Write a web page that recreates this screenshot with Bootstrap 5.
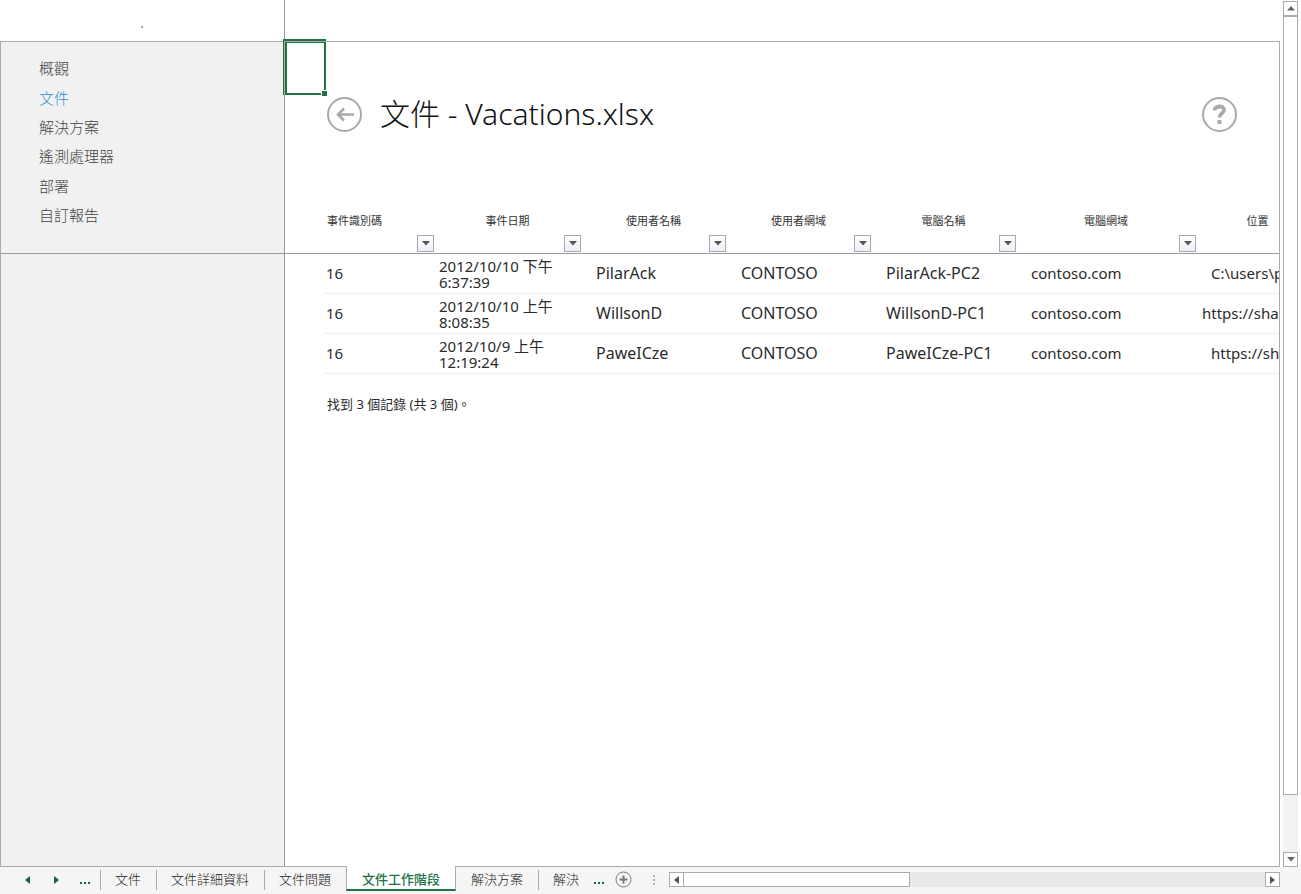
<!DOCTYPE html>
<html lang="zh-Hant">
<head>
<meta charset="utf-8">
<meta name="viewport" content="width=device-width, initial-scale=1">
<title>文件 - Vacations.xlsx</title>
<link href="https://cdn.jsdelivr.net/npm/bootstrap@5.3.0/dist/css/bootstrap.min.css" rel="stylesheet">
<script src="https://cdn.jsdelivr.net/npm/bootstrap@5.3.0/dist/js/bootstrap.bundle.min.js" defer></script>
<style>
:root { --line: #ababab; --rule: #9a9a9a; --green: #217346; --ink: #2b2b2b; }
body { font-family: "Noto Sans", "Noto Sans CJK TC", sans-serif; font-size: 15px; color: var(--ink); background: #fff; }
button { padding: 0; background: #fff; }
svg { display: block; }

/* Frozen panes */
.panes { display: grid; grid-template-columns: 285px minmax(0, 1fr); grid-template-rows: 41px 213px minmax(0, 1fr); border-bottom: 1px solid var(--line); }
.corner { border-right: 1px solid var(--rule); color: #888; line-height: 44px; }
.side-nav, .side-fill { background: #f1f1f1; border-left: 1px solid var(--line); border-right: 1px solid var(--rule); }
.side-nav { border-top: 1px solid var(--line); border-bottom: 1px solid var(--rule); padding: 12px 0 0 38px; }
.side-nav ul { display: grid; grid-auto-rows: 1fr; height: 176px; align-items: center; }
.side-nav a { color: #444; text-decoration: none; font-weight: 300; }
.side-nav a.current { color: #2a8fd4; }
.sheet { grid-row: 2 / 4; grid-column: 2; border-top: 1px solid var(--line); border-right: 1px solid var(--line); }
.picked { left: -2px; top: -3px; width: 43px; height: 56px; border: 2px solid var(--green); border-left-width: 4px; border-top-width: 4px; }
.picked::before { content: ""; position: absolute; left: -3px; top: -2px; width: 42px; height: 54px; border: 1px solid var(--line); border-width: 1px 0 0 1px; }
.picked::after { content: ""; position: absolute; right: -3px; bottom: -3px; width: 6px; height: 6px; background: var(--green); border: 1px solid #fff; border-width: 1px 0 0 1px; }

.title-bar { height: 144px; padding: 0 42px; }
.title-bar h1 { font-size: 30px; font-weight: 300; line-height: 40px; color: #111; padding-left: 18px; }
.round { width: 35px; height: 35px; border: 0; }

/* Sessions table */
.sessions { table-layout: fixed; width: 1036px; border-collapse: separate; border-spacing: 0; }
.sessions th { height: 68px; border-bottom: 1px solid var(--rule); font-size: 11px; font-weight: 400; line-height: 16px; text-align: center; vertical-align: bottom; padding: 0 2px 1px; color: #333; }
.sessions th:nth-child(2) { text-align: left; }
.sessions th span { display: block; padding: 0 5px 0 1px; margin-bottom: 6px; }
.sessions td { height: 40px; padding: 0 0 2px 13px; line-height: 16px; white-space: nowrap; border-bottom: 1px solid #eee; }
.sessions td:first-child { border: 0; }
.sessions td:nth-child(2) { padding-left: 2px; }
.sessions td:nth-child(3) { padding: 0 0 0 3px; }
.sessions td.name { font-size: 16px; }
.sessions td.flush { padding-left: 4px; }
.filter { display: flex; align-items: center; justify-content: center; width: 17px; height: 17px; margin-left: auto; border: 1px solid #a3aab5; background: linear-gradient(#fff, #eceff6); }
.found { font-size: 13px; line-height: 20px; padding: 20px 0 0 42px; }

/* Scroll bars */
.vbar { width: 15px; margin: 1px 3px 0; background: #f3f3f3; }
.arrow { flex: none; width: 15px; height: 15px; border: 1px solid var(--line); display: flex; align-items: center; justify-content: center; }
.vthumb { flex: 0 0 90%; border: 1px solid var(--line); background: #fff; }
.hbar { height: 15px; margin: 5px 21px 0 14px; background: #e9e9e9; }
.hthumb { flex: 0 0 37%; border: 1px solid var(--line); border-left: 0; background: #fff; }

/* Sheet tabs */
.tabs { height: 27px; background: #f5f5f5; font-size: 13px; padding-left: 13px; }
.tabs a { color: #222; text-decoration: none; line-height: 25px; padding: 0 15px; flex: none; position: relative; font-weight: 300; }
.tabs a.split::before { content: ""; position: absolute; left: 0; top: 3px; height: 20px; border-left: 1px solid var(--line); }
.tabs a.active { background: #fff; margin-top: -1px; line-height: 27px; height: 25px; border: 1px solid var(--line); border-width: 0 1px; border-bottom: 2px solid var(--green); color: var(--green); font-weight: 500; }
.tool { border: 0; background: none; height: 25px; flex: none; display: flex; align-items: center; justify-content: center; }
.step { width: 29px; }
.grip { margin-left: 11px; }
</style>
</head>
<body class="vh-100 d-flex flex-column overflow-hidden">
<div class="d-flex flex-grow-1" style="min-height:0">
  <main class="panes flex-grow-1">
    <div class="corner text-center">.</div>
    <div></div>
    <nav class="side-nav" aria-label="檢視">
      <ul class="list-unstyled m-0">
        <li><a href="#">概觀</a></li>
        <li><a href="#" class="current">文件</a></li>
        <li><a href="#">解決方案</a></li>
        <li><a href="#">遙測處理器</a></li>
        <li><a href="#">部署</a></li>
        <li><a href="#">自訂報告</a></li>
      </ul>
    </nav>
    <section class="sheet position-relative">
      <div class="position-absolute picked"></div>
      <div class="overflow-hidden h-100">
        <header class="title-bar d-flex align-items-center">
          <button class="round" type="button" aria-label="返回">
            <svg width="35" height="35" viewBox="0 0 35 35" fill="none" stroke="#a9a9a9"><circle cx="17.5" cy="17.5" r="16.5" stroke-width="2"/><path d="M27 17.5H11M17 11.5L11 17.5L17 23.5" stroke-width="2.6"/></svg>
          </button>
          <h1 class="m-0 flex-grow-1 text-nowrap">文件 - Vacations.xlsx</h1>
          <button class="round" type="button" aria-label="說明">
            <svg width="35" height="35" viewBox="0 0 35 35" fill="none" stroke="#a9a9a9"><circle cx="17.5" cy="17.5" r="16.5" stroke-width="2"/><path d="M12.5 13.5C12.5 8.5 22 8 22 13C22 16.5 17.5 16 17.5 20.5" stroke-width="3.8"/><rect x="15.500" y="23" width="4" height="4" fill="#a9a9a9" stroke="none"/></svg>
          </button>
        </header>
        <table class="sessions">
          <colgroup><col style="width:39px"><col style="width:112px"><col style="width:147px"><col style="width:145px"><col style="width:145px"><col style="width:145px"><col style="width:180px"><col style="width:123px"></colgroup>
          <thead>
            <tr>
              <th></th>
              <th scope="col"><span>事件識別碼</span><button class="filter" type="button" aria-label="篩選"><svg width="8" height="5"><path d="M0 0H8L4 4.5Z" fill="#555"/></svg></button></th>
              <th scope="col"><span>事件日期</span><button class="filter" type="button" aria-label="篩選"><svg width="8" height="5"><path d="M0 0H8L4 4.5Z" fill="#555"/></svg></button></th>
              <th scope="col"><span>使用者名稱</span><button class="filter" type="button" aria-label="篩選"><svg width="8" height="5"><path d="M0 0H8L4 4.5Z" fill="#555"/></svg></button></th>
              <th scope="col"><span>使用者網域</span><button class="filter" type="button" aria-label="篩選"><svg width="8" height="5"><path d="M0 0H8L4 4.5Z" fill="#555"/></svg></button></th>
              <th scope="col"><span>電腦名稱</span><button class="filter" type="button" aria-label="篩選"><svg width="8" height="5"><path d="M0 0H8L4 4.5Z" fill="#555"/></svg></button></th>
              <th scope="col"><span>電腦網域</span><button class="filter" type="button" aria-label="篩選"><svg width="8" height="5"><path d="M0 0H8L4 4.5Z" fill="#555"/></svg></button></th>
              <th scope="col"><span>位置</span><button class="filter" type="button" aria-label="篩選"><svg width="8" height="5"><path d="M0 0H8L4 4.5Z" fill="#555"/></svg></button></th>
            </tr>
          </thead>
          <tbody>
            <tr><td></td><td>16</td><td>2012/10/10 下午<br>6:37:39</td><td class="name">PilarAck</td><td class="name">CONTOSO</td><td class="name">PilarAck-PC2</td><td>contoso.com</td><td>C:\users\p</td></tr>
            <tr><td></td><td>16</td><td>2012/10/10 上午<br>8:08:35</td><td class="name">WillsonD</td><td class="name">CONTOSO</td><td class="name">WillsonD-PC1</td><td>contoso.com</td><td class="flush">https://sha</td></tr>
            <tr><td></td><td>16</td><td>2012/10/9 上午<br>12:19:24</td><td class="name">PaweICze</td><td class="name">CONTOSO</td><td class="name">PaweICze-PC1</td><td>contoso.com</td><td>https://sh</td></tr>
          </tbody>
        </table>
        <p class="found m-0">找到 3 個記錄 (共 3 個)。</p>
      </div>
    </section>
    <div class="side-fill"></div>
  </main>
  <div class="vbar d-flex flex-column flex-shrink-0">
    <button class="arrow" type="button" aria-label="向上捲動"><svg width="8" height="5"><path d="M0 4.5H8L4 0Z" fill="#666"/></svg></button>
    <div class="vthumb"></div>
    <button class="arrow mt-auto" type="button" aria-label="向下捲動"><svg width="8" height="5"><path d="M0 0H8L4 4.5Z" fill="#666"/></svg></button>
  </div>
</div>
<footer class="tabs d-flex flex-shrink-0">
  <button class="tool step" type="button" aria-label="上一張"><svg width="5" height="8"><path d="M5 0V8L0 4Z" fill="#0e6b37"/></svg></button>
  <button class="tool step" type="button" aria-label="下一張"><svg width="5" height="8"><path d="M0 0V8L5 4Z" fill="#0e6b37"/></svg></button>
  <button class="tool step" type="button" aria-label="更多"><svg width="11" height="8"><path d="M0 6h2v2H0zM4 6h2v2H4zM8 6h2v2H8z" fill="#0e6b37"/></svg></button>
  <a href="#" class="split">文件</a>
  <a href="#" class="split">文件詳細資料</a>
  <a href="#" class="split">文件問題</a>
  <a href="#" class="active" aria-current="page">文件工作階段</a>
  <a href="#">解決方案</a>
  <a href="#" class="split">解決</a>
  <button class="tool" type="button" aria-label="更多"><svg width="11" height="8"><path d="M0 6h2v2H0zM4 6h2v2H4zM8 6h2v2H8z" fill="#0e6b37"/></svg></button>
  <button class="tool step mx-1" type="button" aria-label="新增工作表"><svg width="17" height="17" viewBox="0 0 17 17" fill="none" stroke="#777"><circle cx="8.5" cy="8.5" r="7.5"/><path d="M4.5 8.5H12.5M8.5 4.5V12.5" stroke-width="2"/></svg></button>
  <button class="tool grip" type="button" aria-label="調整大小"><svg width="2" height="10"><path d="M0 0h2v2H0zM0 4h2v2H0zM0 8h2v2H0z" fill="#b5b5b5"/></svg></button>
  <div class="hbar d-flex flex-grow-1">
    <button class="arrow" type="button" aria-label="向左捲動"><svg width="5" height="8"><path d="M5 0V8L0 4Z" fill="#555"/></svg></button>
    <div class="hthumb"></div>
    <button class="arrow ms-auto" type="button" aria-label="向右捲動"><svg width="5" height="8"><path d="M0 0V8L5 4Z" fill="#555"/></svg></button>
  </div>
</footer>
</body>
</html>
